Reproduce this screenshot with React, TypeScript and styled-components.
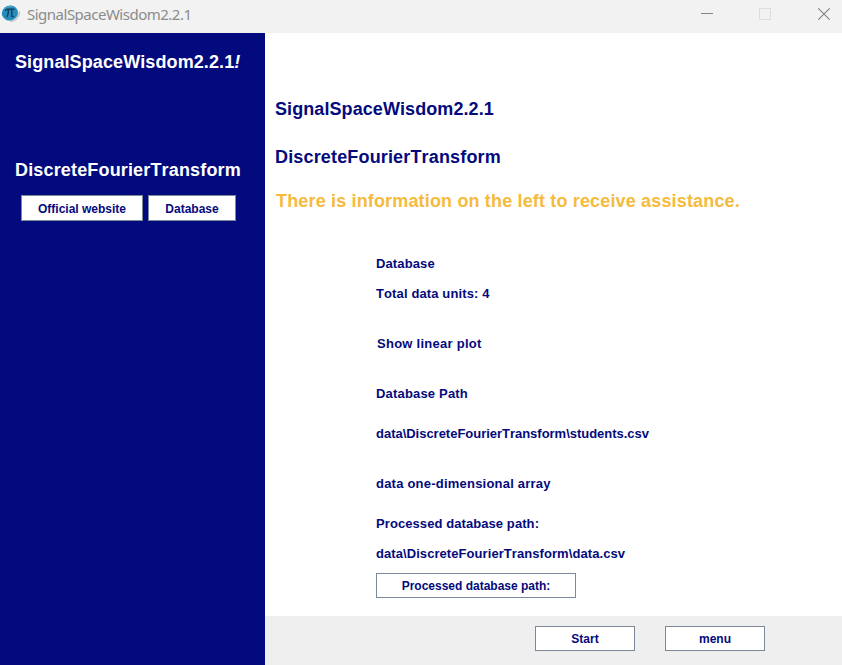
import React from "react";
import styled, { createGlobalStyle } from "styled-components";

const GlobalStyle = createGlobalStyle`
  * { box-sizing: border-box; }
  body { margin: 0; background: #fff; overflow: hidden; }
`;

const Window = styled.div`
  width: 842px;
  height: 665px;
  display: flex;
  flex-direction: column;
  background: #fff;
  color: #040a7c;
  font-family: "Liberation Sans", Arial, sans-serif;
  font-weight: bold;
  font-kerning: none;
  white-space: nowrap;
`;

const TitleBar = styled.header`
  height: 33px;
  flex: none;
  display: flex;
  background: #f2f2f2;
`;

const AppIcon = styled.svg`
  flex: none;
  margin: 4px 0 0 1px;
`;

const WindowTitle = styled.span`
  flex: 1;
  margin-left: 7px;
  font: 400 15px/29px "Noto Sans", "Open Sans", sans-serif;
  letter-spacing: -0.5px;
  color: #8b8b8b;
`;

const WindowControls = styled.svg`
  flex: none;
`;

const Body = styled.div`
  flex: 1;
  display: flex;
  min-height: 0;
`;

const Sidebar = styled.aside`
  width: 265px;
  flex: none;
  padding: 19px 0 0 15px;
  background: #020a7d;
  color: #fff;
`;

const Heading = styled.h2<{ $gap?: number; $spacing?: number; $indent?: number; $warm?: boolean }>`
  margin: 0 0 ${(p) => p.$gap ?? 0}px ${(p) => p.$indent ?? 0}px;
  font-size: 18px;
  font-weight: bold;
  line-height: 20px;
  letter-spacing: ${(p) => p.$spacing ?? 0}px;
  ${(p) => p.$warm && "color: #f5bb3d;"}
`;

const LinkRow = styled.div`
  display: flex;
  gap: 5px;
  margin: 15px 0 0 6px;
`;

const Button = styled.button<{ $width: number }>`
  width: ${(p) => p.$width}px;
  height: 25px;
  padding: 1px 0 0 0;
  border: 1px solid #7a8a99;
  border-radius: 0;
  background: #fff;
  color: #040a7c;
  font: bold 12px/22px "Liberation Sans", Arial, sans-serif;
  text-align: center;
`;

const SidebarButton = styled(Button)`
  height: 26px;
  line-height: 24px;
`;

const Main = styled.main`
  flex: 1;
  display: flex;
  flex-direction: column;
  min-width: 0;
`;

const Content = styled.section`
  height: 583px;
  padding: 66px 0 0 10px;
`;

const Details = styled.div`
  margin: 43px 0 0 101px;
`;

const Line = styled.p<{ $gap?: number; $spacing?: number; $indent?: number }>`
  margin: 0 0 ${(p) => p.$gap ?? 0}px ${(p) => p.$indent ?? 0}px;
  font-size: 13px;
  line-height: 20px;
  letter-spacing: ${(p) => p.$spacing ?? 0}px;
`;

const Footer = styled.footer`
  flex: 1;
  display: flex;
  gap: 30px;
  padding: 10px 0 0 270px;
  background: #efefef;
`;

export default function App() {
  return (
    <>
      <GlobalStyle />
      <Window>
        <TitleBar>
          <AppIcon width="19" height="19" viewBox="0 0 19 19">
            <path d="M18.6 7.3c1 5.4-4.2 10.6-9.6 10.1 3.6-1.4 7-4.6 9.6-10.1Z" fill="#d3d4d5" stroke="#b9bdc0" strokeWidth=".7" />
            <ellipse cx="8.9" cy="9" rx="8.1" ry="7.4" transform="rotate(-20 8.9 9)" fill="#268bbd" />
            <path d="M2 6C5 1 11 .8 14.5 3.4 9 3 5 4 2 6Z" fill="#459fc6" />
            <path d="M4.2 6.6c.7-1.1 1.5-1.4 2.5-1.4h6.6M7.4 5.4c0 3.4-.4 6-1.8 7.6M10.8 5.4v6.2c0 1.4.9 1.6 1.9.7" fill="none" stroke="#173f58" strokeWidth="1.4" />
          </AppIcon>
          <WindowTitle>SignalSpaceWisdom2.2.1</WindowTitle>
          <WindowControls width="142" height="33" viewBox="700 0 142 33" fill="none">
            <path d="M701 13.5h12" stroke="#858585" />
            <rect x="759.5" y="8.5" width="11" height="11" stroke="#dddddd" />
            <path d="M818.3 8.3l11.4 11.4M829.7 8.3l-11.4 11.4" stroke="#7f7f7f" strokeWidth="1.1" />
          </WindowControls>
        </TitleBar>
        <Body>
          <Sidebar>
            <Heading $gap={88} $spacing={0.1}>
              SignalSpaceWisdom2.2.1<em>!</em>
            </Heading>
            <Heading $spacing={0.16}>DiscreteFourierTransform</Heading>
            <LinkRow>
              <SidebarButton $width={122}>Official website</SidebarButton>
              <SidebarButton $width={88}>Database</SidebarButton>
            </LinkRow>
          </Sidebar>
          <Main>
            <Content>
              <Heading $gap={28} $spacing={0.08}>SignalSpaceWisdom2.2.1</Heading>
              <Heading $gap={24} $spacing={0.16}>DiscreteFourierTransform</Heading>
              <Heading $warm $indent={1} $spacing={0.16}>There is information on the left to receive assistance.</Heading>
              <Details>
                <Line $gap={10} $spacing={0.12}>Database</Line>
                <Line $gap={30} $spacing={0.12}>Total data units: 4</Line>
                <Line $gap={30} $spacing={0.26} $indent={1}>Show linear plot</Line>
                <Line $gap={20} $spacing={0.18}>Database Path</Line>
                <Line $gap={30} $spacing={-0.02}>data\DiscreteFourierTransform\students.csv</Line>
                <Line $gap={20} $spacing={0.22}>data one-dimensional array</Line>
                <Line $gap={10} $spacing={0.08}>Processed database path:</Line>
                <Line $gap={9} $spacing={0.07}>data\DiscreteFourierTransform\data.csv</Line>
                <Button $width={200}>Processed database path:</Button>
              </Details>
            </Content>
            <Footer>
              <Button $width={100}>Start</Button>
              <Button $width={100}>menu</Button>
            </Footer>
          </Main>
        </Body>
      </Window>
    </>
  );
}
